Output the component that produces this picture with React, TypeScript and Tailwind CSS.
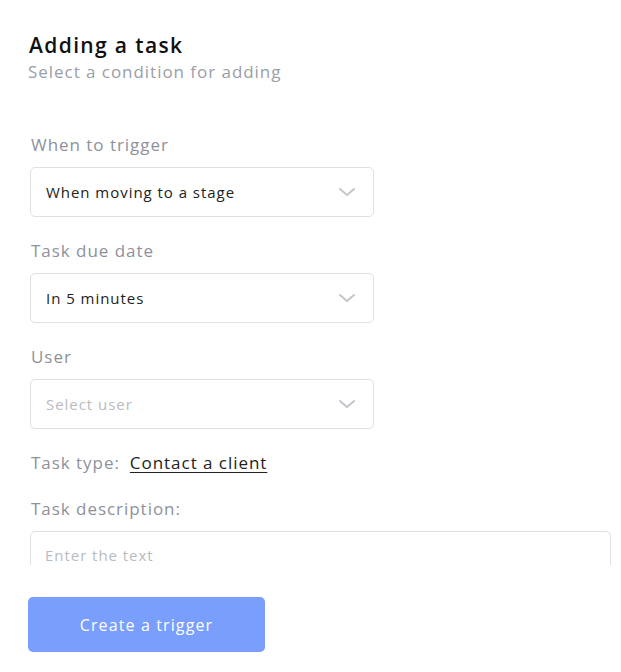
import React from 'react';

const font = { fontFamily: '"Open Sans", "Noto Sans", sans-serif' };

const Chevron: React.FC = () => (
  <svg width="18" height="10" viewBox="0 0 18 10" fill="none" className="text-[#c4c6cc]">
    <path d="M2 2l7 6 7-6" stroke="currentColor" strokeWidth="2" strokeLinecap="round" strokeLinejoin="round" />
  </svg>
);

const SelectField: React.FC<{ label: string; value: string; placeholder?: boolean }> = ({ label, value, placeholder }) => (
  <div className="flex flex-col">
    <div className="text-[17px] text-[#8e919b] leading-[24px] pl-[1px]">{label}</div>
    <div className="mt-[10px] w-[344px] h-[50px] border border-[#dfe0e3] rounded-[5px] flex items-center justify-between pl-[15px] pr-[17px]">
      <span className={placeholder ? 'text-[15px] text-[#b9bbc1]' : 'text-[15px] text-[#222]'}>{value}</span>
      <Chevron />
    </div>
  </div>
);

const App: React.FC = () => {
  return (
    <div className="w-[621px] h-[672px] bg-white overflow-hidden tracking-[0.06em]" style={font}>
      <div className="pt-[31px] pl-[29px]">
        <h1 className="text-[21px] font-semibold text-[#111] leading-[28px] tracking-[0.065em]">Adding a task</h1>
        <p className="mt-[2px] text-[17px] text-[#9b9ea7] leading-[22px] -ml-[1px]">Select a condition for adding</p>
      </div>

      <div className="pl-[30px] pt-[50px] flex flex-col gap-[22px]">
        <SelectField label="When to trigger" value="When moving to a stage" />
        <SelectField label="Task due date" value="In 5 minutes" />
        <SelectField label="User" value="Select user" placeholder />

        <div className="flex items-center gap-[10px] text-[17px] leading-[24px] pl-[1px]">
          <span className="text-[#8e919b]">Task type:</span>
          <span className="text-[#222] underline underline-offset-[3px]">Contact a client</span>
        </div>

        <div className="flex flex-col">
          <div className="text-[17px] text-[#8e919b] leading-[24px] pl-[1px]">Task description:</div>
          <div className="mt-[10px] h-[34px] overflow-hidden">
            <div className="w-[581px] h-[90px] border border-[#dfe0e3] rounded-[5px] pl-[14px] pt-[11px]">
              <span className="text-[15px] text-[#b9bbc1]">Enter the text</span>
            </div>
          </div>
        </div>
      </div>

      <div className="pl-[28px] pt-[32px]">
        <button className="w-[237px] h-[55px] rounded-[5px] bg-[#799efc] text-white text-[16px] tracking-[0.07em]">
          Create a trigger
        </button>
      </div>
    </div>
  );
};

export default App;
